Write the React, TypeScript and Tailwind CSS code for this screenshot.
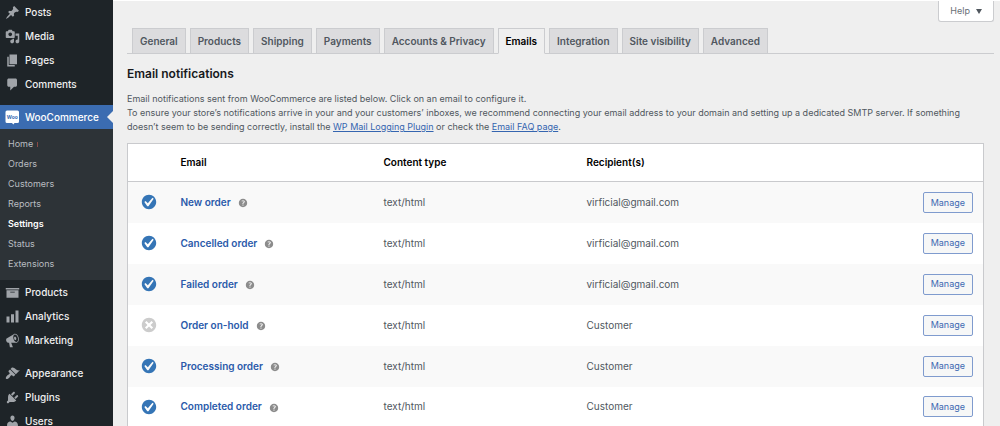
import React from "react";

const icons = {
  posts:
    "M10.44 3.02l1.82-1.82 6.36 6.35-1.83 1.82c-1.05-.68-2.48-.57-3.41.36l-.75.75c-.92.93-1.04 2.35-.35 3.41l-1.83 1.82-2.41-2.41-2.8 2.79c-.42.42-3.38 2.71-3.8 2.29s1.86-3.39 2.28-3.81l2.79-2.79L4.1 9.36l1.83-1.82c1.05.69 2.48.57 3.4-.36l.75-.75c.93-.92 1.05-2.35.36-3.41z",
  media:
    "M13 11V4c0-.55-.45-1-1-1h-1.67L9 1H5L3.67 3H2c-.55 0-1 .45-1 1v7c0 .55.45 1 1 1h10c.55 0 1-.45 1-1zM7 4.5c1.38 0 2.5 1.12 2.5 2.5S8.38 9.5 7 9.5 4.5 8.38 4.5 7 5.62 4.5 7 4.5zM14 6h5v10.5c0 1.38-1.12 2.5-2.5 2.5S14 17.88 14 16.5s1.12-2.5 2.5-2.5c.17 0 .34.02.5.05V9h-3V6zm-4 8.05V13h2v3.5c0 1.38-1.12 2.5-2.5 2.5S7 17.88 7 16.5 8.12 14 9.5 14c.17 0 .34.02.5.05z",
  pages: "M6 15V2h10v13H6zm-1 1h8v2H3V5h2v11z",
  comments:
    "M5 2h9c1.1 0 2 .9 2 2v7c0 1.1-.9 2-2 2h-2l-5 5v-5H5c-1.1 0-2-.9-2-2V4c0-1.1.9-2 2-2z",
  products: "M19 4v2H1V4h18zM2 7h16v10H2V7zm11 3V9H7v1h6z",
  analytics: "M18 18V2h-4v16h4zm-6 0V7H8v11h4zm-6 0v-8H2v8h4z",
  marketing:
    "M18.15 5.94c.46 1.62.38 3.22-.02 4.48-.42 1.28-1.26 2.18-2.3 2.48-.16.06-.26.06-.4.06-.06.02-.12.02-.18.02-.06.02-.14.02-.22.02h-6.8l2.22 5.5c.02.14-.06.26-.14.34-.08.1-.24.16-.34.16H6.95c-.1 0-.26-.06-.34-.16-.08-.08-.16-.2-.14-.34l-1-5.5H4.25l-.02-.02c-.5.06-1.08-.18-1.54-.62s-.88-1.08-1.06-1.88c-.24-.8-.2-1.56-.02-2.2.18-.62.58-1.08 1.06-1.3l.02-.02 9-5.4c.1-.06.18-.1.24-.16.06-.04.14-.08.24-.12.16-.08.28-.12.5-.18 1.04-.3 2.24.1 3.22.98s1.84 2.24 2.26 3.86zm-2.58 5.98h-.02c.4-.1.74-.34 1.04-.7.58-.7.86-1.76.86-3.04 0-.64-.1-1.3-.28-1.98-.34-1.36-1.02-2.5-1.78-3.24s-1.68-1.1-2.46-.88c-.82.22-1.4.96-1.7 2-.32 1.04-.28 2.36.06 3.72.38 1.36 1 2.5 1.8 3.24.78.74 1.62 1.1 2.48.88zm-2.54-7.08c.22-.04.42-.02.62.04.38.16.76.48 1.02 1s.42 1.2.42 1.78c0 .3-.04.56-.12.8-.18.48-.44.84-.86.94-.34.1-.8-.06-1.14-.4s-.64-.86-.78-1.5c-.18-.62-.12-1.24.02-1.72s.48-.84.82-.94z",
  appearance:
    "M14.48 11.06L7.41 3.99l1.5-1.5c.5-.56 2.3-.47 3.51.32 1.21.8 1.43 1.28 2.91 2.1 1.18.64 2.45 1.26 4.45.85zm-.71.71L6.7 4.7 4.93 6.47c-.39.39-.39 1.02 0 1.41l1.06 1.06c.39.39.39 1.03 0 1.42-.6.6-1.43 1.11-2.21 1.69-.35.26-.7.53-1.01.84C1.43 14.23.4 16.08 1.4 17.07c.99 1 2.84-.03 4.18-1.36.31-.31.58-.66.85-1.02.57-.78 1.08-1.61 1.69-2.21.39-.39 1.02-.39 1.41 0l1.06 1.06c.39.39 1.02.39 1.41 0z",
  plugins:
    "M13.11 4.36L9.87 7.6 8 5.73l3.24-3.24c.35-.34 1.05-.2 1.56.32.52.51.66 1.21.31 1.55zm-8 1.77l.91-1.12 9.01 9.01-1.19.84c-.71.71-2.63 1.16-3.82 1.16H6.14L4.9 17.26c-.59.59-1.54.59-2.12 0-.59-.58-.59-1.53 0-2.12l1.24-1.24v-3.88c0-1.13.4-3.19 1.09-3.89zm7.26 3.97l3.24-3.24c.34-.35 1.04-.21 1.55.31.52.51.66 1.21.31 1.55l-3.24 3.25z",
  users:
    "M10 9.25c-2.27 0-2.73-3.44-2.73-3.44C7 4.02 7.82 2 9.97 2c2.16 0 2.98 2.02 2.71 3.81 0 0-.41 3.44-2.68 3.44zm0 2.57L12.72 10c2.39 0 4.52 2.33 4.52 4.53v2.49s-3.65 1.13-7.24 1.13c-3.65 0-7.24-1.13-7.24-1.13v-2.49c0-2.25 1.94-4.48 4.47-4.48z",
  enabled:
    "M10 2c-4.42 0-8 3.58-8 8s3.58 8 8 8 8-3.58 8-8-3.58-8-8-8zm-.615 12.66h-1.34l-3.24-4.54 1.341-1.25 2.569 2.4 5.141-5.931 1.34.94-5.811 8.381z",
  disabled:
    "M10 2c4.42 0 8 3.58 8 8s-3.58 8-8 8-8-3.58-8-8 3.58-8 8-8zm4.5 10.8L11.7 10l2.8-2.8-1.7-1.7L10 8.3 7.2 5.5 5.5 7.2 8.3 10l-2.8 2.8 1.7 1.7 2.8-2.8 2.8 2.8z",
  help: "M17 10c0-3.87-3.14-7-7-7-3.87 0-7 3.13-7 7s3.13 7 7 7c3.86 0 7-3.13 7-7zm-6.3 1.48H9.14v-.43c0-.38.08-.7.24-.98s.46-.57.88-.89c.41-.29.68-.53.81-.71.14-.18.2-.39.2-.62 0-.25-.09-.44-.28-.58-.19-.13-.45-.19-.79-.19-.58 0-1.25.19-2 .57l-.64-1.28c.87-.49 1.8-.74 2.77-.74.81 0 1.45.2 1.92.58.48.39.71.91.71 1.55 0 .43-.09.8-.29 1.11-.19.32-.57.67-1.11 1.06-.38.28-.61.49-.71.63-.1.15-.15.34-.15.57v.35zm-1.47 2.74c-.18-.17-.27-.42-.27-.73 0-.33.08-.58.26-.75s.43-.25.77-.25c.32 0 .57.09.75.26s.27.42.27.74c0 .3-.09.55-.27.72-.18.18-.43.27-.75.27-.33 0-.58-.09-.76-.26z",
};

type IconName = keyof typeof icons;

const topMenu: { label: string; icon: IconName }[] = [
  { label: "Posts", icon: "posts" },
  { label: "Media", icon: "media" },
  { label: "Pages", icon: "pages" },
  { label: "Comments", icon: "comments" },
];

const storeMenu: { label: string; icon: IconName }[] = [
  { label: "Products", icon: "products" },
  { label: "Analytics", icon: "analytics" },
  { label: "Marketing", icon: "marketing" },
];

const siteMenu: { label: string; icon: IconName }[] = [
  { label: "Appearance", icon: "appearance" },
  { label: "Plugins", icon: "plugins" },
  { label: "Users", icon: "users" },
];

const subMenu = [
  "Home",
  "Orders",
  "Customers",
  "Reports",
  "Settings",
  "Status",
  "Extensions",
];

const tabs = [
  "General",
  "Products",
  "Shipping",
  "Payments",
  "Accounts & Privacy",
  "Emails",
  "Integration",
  "Site visibility",
  "Advanced",
];

const emails = [
  { name: "New order", recipient: "virficial@gmail.com", enabled: true },
  { name: "Cancelled order", recipient: "virficial@gmail.com", enabled: true },
  { name: "Failed order", recipient: "virficial@gmail.com", enabled: true },
  { name: "Order on-hold", recipient: "Customer", enabled: false },
  { name: "Processing order", recipient: "Customer", enabled: true },
  { name: "Completed order", recipient: "Customer", enabled: true },
];

const Icon = ({ name, className }: { name: IconName; className: string }) => (
  <svg viewBox="0 0 20 20" fill="currentColor" className={className} aria-hidden="true">
    <path d={icons[name]} />
  </svg>
);

const WooIcon = () => (
  <svg viewBox="0 0 15 15" className="size-[15px] shrink-0" aria-hidden="true">
    <path
      d="M2 .5h10.500a1.500 1.500 0 0 1 1.500 1.500v9.500a1.500 1.500 0 0 1-1.500 1.500H9.500L8.300 14.600 7 13H2a1.500 1.500 0 0 1-1.500-1.500V2A1.500 1.500 0 0 1 2 .5z"
      fill="#fff"
    />
    <text
      x="7.300"
      y="8.700"
      fontSize="5"
      fontWeight="700"
      textAnchor="middle"
      fill="#3c6eb4"
    >
      Woo
    </text>
  </svg>
);

const MenuList = ({ items }: { items: { label: string; icon: IconName }[] }) => (
  <ul>
    {items.map((item) => (
      <li key={item.label}>
        <a
          href="#"
          className="flex h-6 items-center gap-[5px] pl-[5px] text-[10px] font-medium text-[#f0f0f1]"
        >
          <Icon name={item.icon} className="size-[15px] shrink-0 text-[#a0a4a9]" />
          {item.label}
        </a>
      </li>
    ))}
  </ul>
);

const Sidebar = () => {
  return (
    <aside className="w-[113px] shrink-0 bg-[#1e2428]">
      <MenuList items={topMenu} />
      <div className="mt-[9px]">
        <a
          href="#"
          className="relative flex h-6 items-center gap-[5px] bg-[#3b6cb1] pl-[5px] text-[10px] font-medium text-white"
        >
          <WooIcon />
          WooCommerce
          <span className="absolute top-1/2 right-0 -translate-y-1/2 border-y-6 border-r-6 border-y-transparent border-r-[#efefef]"></span>
        </a>
        <ul className="bg-[#2d3337] pt-[5px] pb-[6px]">
          {subMenu.map((item) => (
            <li key={item}>
              <a
                href="#"
                className={`flex h-5 items-center pl-2 text-[9px] ${
                  item === "Settings"
                    ? "font-semibold text-white"
                    : "text-[#b9bdc1]"
                }`}
              >
                {item}
                {item === "Home" && (
                  <span className="ml-1 h-[5px] w-px bg-[#8a4a44]"></span>
                )}
              </a>
            </li>
          ))}
        </ul>
      </div>
      <MenuList items={storeMenu} />
      <div className="mt-[9px]">
        <MenuList items={siteMenu} />
      </div>
    </aside>
  );
};

const Tabs = () => (
  <nav className="flex gap-1 border-b border-[#cbcccf] pl-[5px]">
    {tabs.map((tab) => (
      <a
        key={tab}
        href="#"
        className={`-mb-px flex h-[26px] items-center border px-[7px] text-[10px] font-semibold whitespace-nowrap ${
          tab === "Emails"
            ? "border-[#cbcccf] border-b-[#efefef] bg-[#efefef] text-black"
            : "border-[#cbcccf] bg-[#dcdcde] text-[#50575e]"
        }`}
      >
        {tab}
      </a>
    ))}
  </nav>
);

const EmailTable = () => (
  <table className="w-full table-fixed border border-[#c9cacd] bg-white text-left text-[10px]">
    <thead>
      <tr className="h-[38px] border-b border-[#c9cacd] text-black">
        <th className="w-[44px]"></th>
        <th className="w-[203px] px-[9px] font-semibold">Email</th>
        <th className="w-[203px] px-[9px] font-semibold">Content type</th>
        <th className="px-[9px] font-semibold">Recipient(s)</th>
        <th className="w-[80px]"></th>
      </tr>
    </thead>
    <tbody>
      {emails.map((email) => (
        <tr key={email.name} className="h-[41px] odd:bg-[#f9f9f9]">
          <td className="pr-[2px]">
            <Icon
              name={email.enabled ? "enabled" : "disabled"}
              className={`mx-auto size-[18px] ${
                email.enabled ? "text-[#3575b6]" : "text-[#cccccc]"
              }`}
            />
          </td>
          <td className="px-[9px]">
            <div className="flex items-center gap-[6px]">
              <a href="#" className="font-semibold text-[#2a5aaa]">
                {email.name}
              </a>
              <Icon name="help" className="mt-[2px] size-3 text-[#8c8c8c]" />
            </div>
          </td>
          <td className="px-[9px]">text/html</td>
          <td className="px-[9px]">{email.recipient}</td>
          <td className="pr-[10px] text-right">
            <a
              href="#"
              className="inline-flex h-[21px] items-center rounded-[2px] border border-[#7f9bce] bg-[#f6f7f7] px-[7px] text-[9px] text-[#3d69b2]"
            >
              Manage
            </a>
          </td>
        </tr>
      ))}
    </tbody>
  </table>
);

const App = () => {
  return (
    <div className="flex h-screen overflow-hidden bg-[#efefef] font-['Inter','Liberation_Sans',sans-serif] text-[9px] text-[#50575e]">
      <Sidebar />
      <main className="min-w-0 flex-1 border-t border-white pr-[6px] pl-[14px]">
        <div className="flex justify-end">
          <button
            type="button"
            className="flex h-[21px] items-center gap-[6px] rounded-b-[3px] border border-t-0 border-[#cbcccf] bg-white px-[11px] text-[9px] text-[#6a7076]"
          >
            Help
            <span className="border-x-3 border-t-5 border-x-transparent border-t-[#50575e]"></span>
          </button>
        </div>
        <div className="mt-[6px]">
          <Tabs />
        </div>
        <div className="pr-[10px]">
          <h2 className="mt-[10px] text-[12px] leading-5 font-semibold text-[#17191c]">
            Email notifications
          </h2>
          <p className="mt-[8px] mb-[9px] leading-[14px]">
            Email notifications sent from WooCommerce are listed below. Click on
            an email to configure it.
            <br />
            To ensure your store’s notifications arrive in your and your
            customers’ inboxes, we recommend connecting your email address to
            your domain and setting up a dedicated SMTP server. If something
            doesn’t seem to be sending correctly, install the{" "}
            <a href="#" className="text-[#3565b0] underline">
              WP Mail Logging Plugin
            </a>{" "}
            or check the{" "}
            <a href="#" className="text-[#3565b0] underline">
              Email FAQ page
            </a>
            .
          </p>
          <EmailTable />
        </div>
      </main>
    </div>
  );
};

export default App;
